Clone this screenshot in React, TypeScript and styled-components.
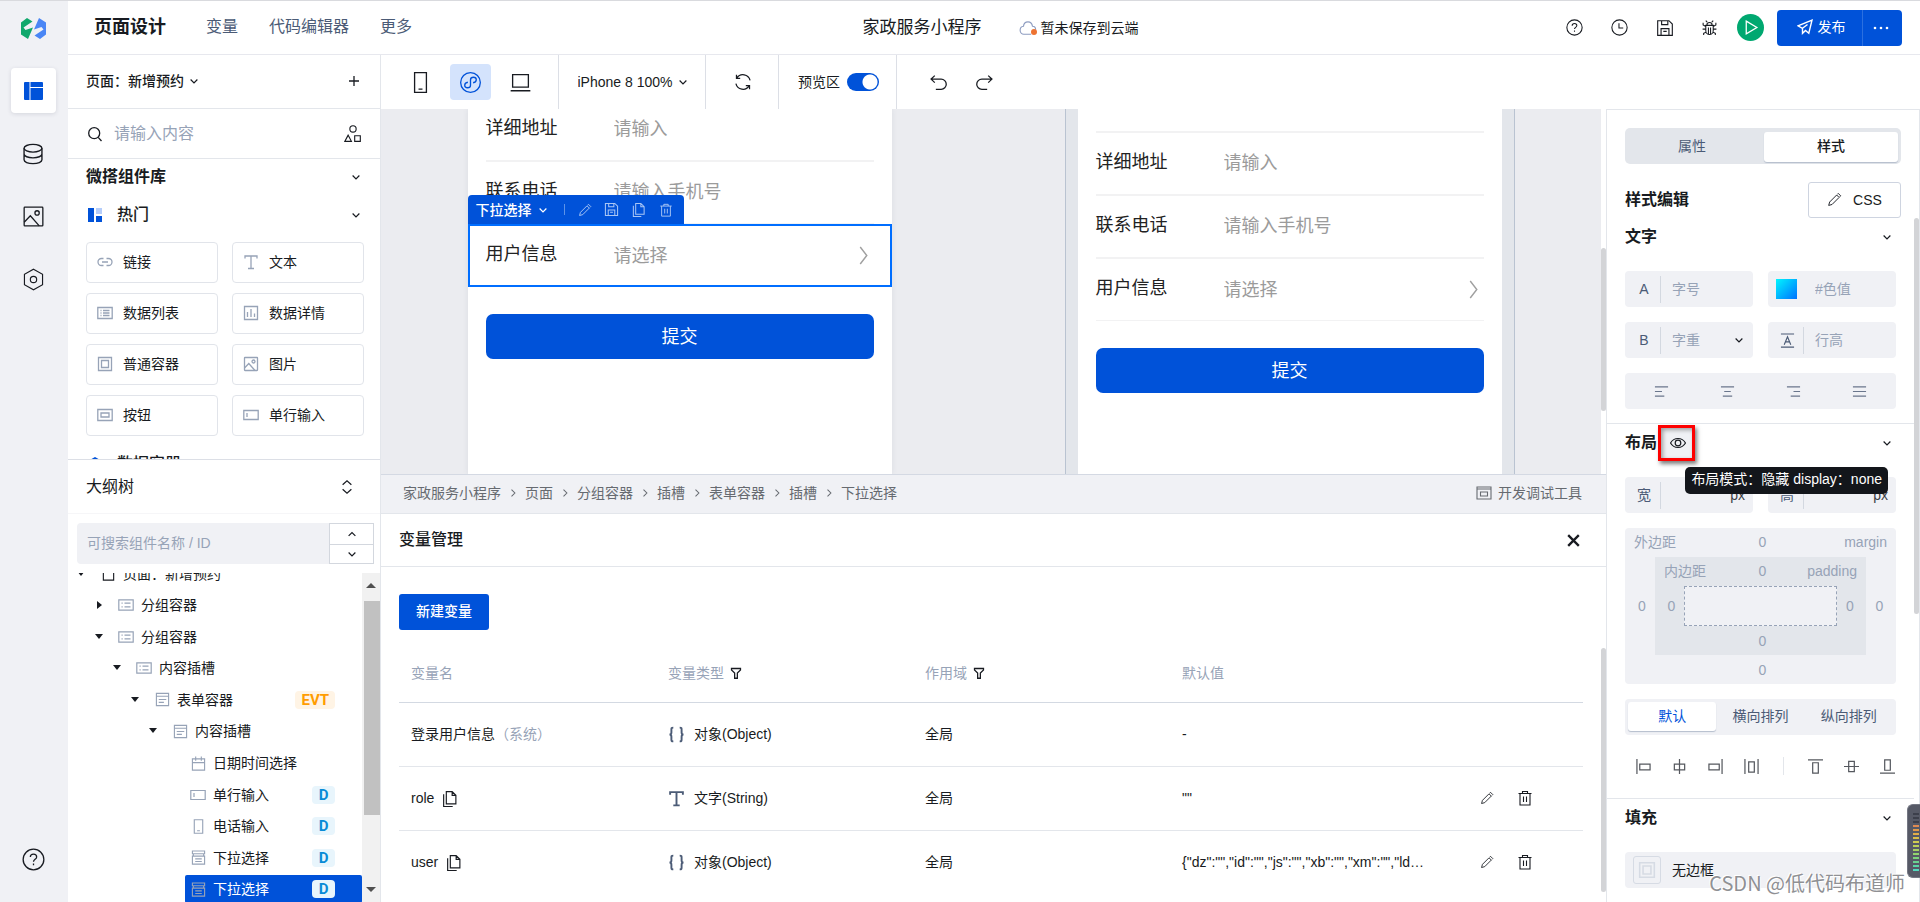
import React from "react";
import styled, { createGlobalStyle, css } from "styled-components";

const c = {
  blue: "#0052d9",
  line: "#e3e6eb",
  soft: "#f0f1f5",
  text: "#181b21",
  slate: "#4b5b76",
  mute: "#97a3b7",
};

const GlobalStyle = createGlobalStyle`
  *, *::before, *::after { box-sizing: border-box; }
  body {
    margin: 0;
    font-family: "Liberation Sans", "Noto Sans CJK SC", sans-serif;
    font-size: 14px;
    line-height: 20px;
    color: ${c.text};
    background: #fff;
  }
  button, input, select { font: inherit; color: inherit; margin: 0; padding: 0; border: 0; background: none; min-width: 0; }
  button { cursor: pointer; }
  select { appearance: none; cursor: pointer; }
  ul, ol { list-style: none; margin: 0; padding: 0; }
  h1, h2, h3 { margin: 0; font-size: 16px; line-height: 24px; font-weight: 500; }
  a { color: inherit; text-decoration: none; }
`;

/* ---------- icons, all drawn on a 16 unit grid ---------- */

const glyphs: Record<string, React.ReactNode> = {
  down: <path d="M3.5 6 8 10.5 12.5 6" />,
  up: <path d="M3.5 10.5 8 6l4.5 4.5" />,
  right: <path d="M6 3.5 10.500 8 6 12.500" />,
  bigRight: <path d="M5.500 1.500 10.500 8l-5 6.500" />,
  updown: <path d="M3 5.500 8 1l5 4.500M3 10.500 8 15l5-4.500" />,
  plus: <path d="M8 3v10M3 8h10" />,
  close: <path d="M3 3l10 10M13 3 3 13" />,
  search: <><circle cx="7.200" cy="7.200" r="5.500" /><path d="m11.200 11.400 3.300 3.600" /></>,
  shapes: <><circle cx="8" cy="3.500" r="2.800" /><path d="M3.700 9 .8 14.500h5.800zM9.500 9.500h5v5h-5z" /></>,
  database: <><ellipse cx="8" cy="3.800" rx="6.500" ry="2.800" /><path d="M1.500 3.800v8.400c0 1.600 2.900 2.800 6.500 2.800s6.500-1.200 6.500-2.800V3.800M1.500 8c0 1.600 2.900 2.800 6.500 2.800s6.500-1.200 6.500-2.800" /></>,
  image: <><rect x="1.500" y="1.500" width="13" height="13" rx=".5" /><circle cx="10.500" cy="5.500" r="1.500" /><path d="m1.500 12 4.300-4.500 6.200 7" /></>,
  hexagon: <><path d="M8 .8 14.300 4.400v7.200L8 15.200l-6.300-3.600V4.400z" /><circle cx="8" cy="8" r="2.200" /></>,
  help: <><circle cx="8" cy="8" r="7.200" /><path d="M5.800 6.300c0-1.300 1-2.100 2.200-2.100s2.200.8 2.200 2c0 1.600-2.200 1.700-2.200 3.300M8 10.800v1.200" /></>,
  clock: <><circle cx="8" cy="8" r="7.200" /><path d="M7.500 4v4.500h4" /></>,
  save: <path d="M1.500 1.500h10l3 3v10h-13zM5 1.500v3.500h5.500V1.500M4.500 14.500V8.500h7v6M6.500 11h3" />,
  bug: <path d="M4.500 6h7v5a3.500 3.500 0 0 1-7 0zM5.500 6c0-3.500 5-3.500 5 0M7 8v6M9 8v6M4.500 9.500h-3M11.500 9.500h3M4.500 7 2 5.500V3.500M11.500 7 14 5.500V3.500M4.700 12.500 2.500 13.500V15M11.300 12.500l2.200 1V15M5.800 3 4.500 1.500M10.200 3l1.300-1.500" />,
  play: <path d="M4 2l10 6-10 6z" />,
  send: <path d="M15 1.200 1 6.800l4.500 2.500v5l3-2.800 3.300 2.700zM5.500 9.300 10.500 5.500" />,
  mobile: <path d="M3.500.5h9v15h-9zM6.500 13h3" />,
  mini: <><ellipse cx="8" cy="8" rx="7.500" ry="7.500" /><path d="M10 8.200c1.600-.3 2.400-1.200 2.400-2.300C12.400 4.600 11.300 4 10.300 4 9 4 8 4.800 8 6v4c0 1.200-1 2-2.300 2-1 0-2.100-.7-2.100-1.900 0-1.100.8-2 2.400-2.300" /></>,
  laptop: <path d="M2 2h12v9.500H2zM.5 14.300h15" />,
  refresh: <path d="M14.300 6.500A6.500 6.500 0 0 0 2.500 4.500M1.700 9.500a6.500 6.500 0 0 0 11.800 2M2.200 1.500v3.300h3.300M13.800 14.500v-3.300h-3.300" />,
  undo: <path d="M4.500 1.500 1 4.800l3.500 3.300M1 4.800h9.500a4.800 4.800 0 0 1 0 9.600H5.500" />,
  redo: <path d="M11.500 1.500 15 4.800l-3.500 3.300M15 4.800H5.500a4.800 4.800 0 0 0 0 9.600h5" />,
  pencil: <path d="M10.300 3.200 2.800 10.700 1.800 14.300l3.600-1 7.500-7.500zM11 2.500l1-1 2.600 2.600-1 1" />,
  copy: <path d="M5 1.500h5.500l3.500 3.500v8H5zM10.500 1.500V5H14M2.500 4v11.500H11" />,
  trash: <path d="M1.500 3.500h13M5.500 3.500v-2h5v2M3 3.500V15h10V3.500M6.500 6.500V12M9.500 6.500V12" />,
  filter: <path d="M2 2h12v2L9.800 8v7H6.200V8L2 4z" />,
  panel: <path d="M1 2h14v12H1zM1 4h14M4.500 7h7v4h-7z" />,
  link: <path d="M6.500 4.500h-2a3.500 3.500 0 0 0 0 7h2M9.500 4.500h2a3.500 3.500 0 0 1 0 7h-2M5 8h6" />,
  type: <path d="M2 4.500V2h12v2.500M8 2v12.500M5 14.500h6" />,
  list: <path d="M.8 2.500h14.400v11H.8zM3.500 5.500h1M6 5.500h6.500M3.500 8h1M6 8h6.500M3.500 10.500h1M6 10.500h6.500" />,
  group: <path d="M.8 2.800h14.400v10.400H.8zM3.500 6.200h1.200M6.500 6.200h6M3.500 9.800h1.200M6.500 9.800h6" />,
  chart: <path d="M1.500 1.500h13v13h-13zM4.500 7v5M8 4v8M11.500 8.500V12" />,
  box: <path d="M1.500 1.500h13v13h-13zM4.500 4.500h7v7h-7z" />,
  button: <path d="M.8 2.500h14.400v11H.8zM4 6h8v4H4z" />,
  field: <path d="M.8 3.500h14.400v9H.8zM4 6v4" />,
  form: <path d="M1.500 1.500h13v13h-13zM1.500 4.500h13M4 8h8M4 11h5.500" />,
  calendar: <path d="M1.500 3h13v12h-13zM1.500 7h13M5 .5V5M11 .5V5" />,
  phone: <path d="M3.500.8h9v14.400h-9zM6.500 12.500h3" />,
  dropdown: <path d="M1.500 1h13v3h-13zM1.500 6.500h13V15h-13zM2.500 4v2.500M13.500 4v2.500M4.500 9.500h7M4.500 12.200h7" />,
  page: <path d="M2.500 1h11v14h-11z" />,
  eye: <><path d="M.5 8C4 2 12 2 15.500 8 12 14 4 14 .5 8z" /><circle cx="8" cy="8" r="2.800" /></>,
  textLeft: <path d="M1 3h14M1 8h7.500M1 13h10" />,
  textCenter: <path d="M1 3h14M4.500 8h7M3 13h10" />,
  textRight: <path d="M1 3h14M8 8h7M5 13h10" />,
  textJustify: <path d="M1 3h14M1 8h14M1 13h14" />,
  lineHeight: <path d="M1 1h14M1 15h14M4.500 12.500 8 4l3.500 8.500M5.800 9.500h4.400" />,
  alignL: <path d="M1 0v16M4 5.500h11v6H4z" />,
  alignC: <path d="M8 0v16M2.500 5.500h11v6h-11z" />,
  alignR: <path d="M15 0v16M1 5.500h11v6H1z" />,
  spread: <path d="M1 0v16M15 0v16M5 3h6v11H5z" />,
  alignT: <path d="M0 1h16M5 4h6v11H5z" />,
  alignM: <path d="M0 8h16M5 2.500h6v11H5z" />,
  alignB: <path d="M0 15h16M5 1h6v11H5z" />,
  cloud: <path d="M4.300 13.500h6.500M14.800 9.500c0-1.700-1.200-2.900-2.800-3C11.600 4 10 2.600 8 2.600 5.800 2.600 4.200 4.200 4 6.500 2.200 6.700 1 8.200 1 10c0 2 1.500 3.500 3.300 3.500" />,
  braces: <path d="M5 1.500C3 1.500 3.200 2.300 3.200 4v2c0 1-.5 2-1.800 2C2.700 8 3.200 9 3.200 10v2c0 1.700-.2 2.500 1.800 2.500M11 1.500c2 0 1.800.8 1.800 2.500v2c0 1 .5 2 1.800 2-1.300 0-1.800 1-1.800 2v2c0 1.700.2 2.500-1.800 2.500" />,
};

const Svg = styled.svg`
  display: block;
  flex: none;
  fill: none;
  stroke: currentColor;
`;

function Icon({ name, size = 16, w = 1.1, color }: { name: string; size?: number; w?: number; color?: string }) {
  return (
    <Svg width={size} height={size} viewBox="0 0 16 16" strokeWidth={w} color={color} aria-hidden="true">
      {glyphs[name]}
    </Svg>
  );
}

/* ---------- shell ---------- */

const Shell = styled.div`
  display: flex;
  height: 100vh;
  border-top: 1px solid #d9dade;
  overflow: hidden;
  position: relative;
`;
const Main = styled.div`
  flex: 1;
  min-width: 0;
  display: flex;
  flex-direction: column;
`;
const Body = styled.div`
  flex: 1;
  min-height: 0;
  display: flex;
`;
const Work = styled.div`
  flex: 1;
  min-width: 0;
  display: flex;
  flex-direction: column;
`;
const Center = styled.div`
  flex: 1;
  min-width: 0;
  display: flex;
  flex-direction: column;
`;

/* ---------- rail ---------- */

const Rail = styled.nav`
  width: 68px;
  flex: none;
  background: ${c.soft};
  display: flex;
  flex-direction: column;
  align-items: center;
  gap: 18px;
  padding: 16px 2px 20px 0;
`;
const Logo = styled.a`
  display: block;
  padding: 1px;
  margin-bottom: 5px;
`;
const RailButton = styled.button<{ $on?: boolean; $last?: boolean }>`
  width: 45px;
  height: 45px;
  display: grid;
  place-items: center;
  border-radius: 4px;
  ${(p) => p.$on && css`background: #fff; box-shadow: 0 1px 4px rgba(40, 50, 80, 0.14);`}
  ${(p) => p.$last && css`margin-top: auto;`}
`;

/* ---------- header ---------- */

const Header = styled.header`
  flex: none;
  height: 54px;
  display: grid;
  grid-template-columns: 1fr auto 1fr;
  align-items: center;
  padding: 0 18px 0 26px;
  border-bottom: 1px solid #e7e8ee;
`;
const Nav = styled.div`
  display: flex;
  align-items: center;
  gap: 31px;
  padding-bottom: 1px;
  font-size: 16px;
  color: ${c.slate};
`;
const Brand = styled.h1`
  font-size: 18px;
  font-weight: 700;
  color: ${c.text};
  margin-right: 9px;
`;
const Project = styled.div`
  display: flex;
  align-items: center;
  gap: 37px;
  padding-left: 5px;
  font-size: 17px;
`;
const Status = styled.span`
  display: flex;
  align-items: center;
  gap: 4px;
  font-size: 14px;
  position: relative;
`;
const Dot = styled.i`
  position: absolute;
  left: 12px;
  top: 11px;
  width: 6px;
  height: 6px;
  border-radius: 50%;
  background: #ed7332;
`;
const Actions = styled.div`
  display: flex;
  align-items: center;
  justify-content: flex-end;
`;
const HeadButton = styled.button`
  width: 45px;
  height: 36px;
  display: grid;
  place-items: center;
`;
const Play = styled.button`
  width: 27px;
  height: 27px;
  border-radius: 50%;
  background: #00a870;
  color: #fff;
  display: grid;
  place-items: center;
  margin: 0 13px 0 5px;
`;
const Publish = styled.button`
  height: 36px;
  width: 85px;
  display: flex;
  align-items: center;
  justify-content: center;
  gap: 5px;
  padding: 0 0 2px 3px;
  background: ${c.blue};
  color: #fff;
  border-radius: 4px 0 0 4px;
`;
const More = styled.button`
  height: 36px;
  width: 40px;
  display: grid;
  place-items: center;
  padding-right: 4px;
  background: ${c.blue};
  color: #fff;
  border-left: 1px solid #2b70e0;
  border-radius: 0 4px 4px 0;
`;

/* ---------- left panel ---------- */

const Left = styled.aside`
  width: 313px;
  flex: none;
  border-right: 1px solid ${c.line};
  display: flex;
  flex-direction: column;
`;
const PageRow = styled.div`
  flex: none;
  height: 54px;
  display: flex;
  align-items: center;
  justify-content: space-between;
  padding: 0 18px 2px;
  border-bottom: 1px solid ${c.line};
  select { font-weight: 500; }
`;
const SelectBox = styled.label`
  display: flex;
  align-items: center;
  gap: 4px;
`;
const SearchRow = styled.label`
  flex: none;
  height: 50px;
  display: flex;
  align-items: center;
  gap: 11px;
  padding: 0 18px 0 19px;
  border-bottom: 1px solid ${c.line};
  font-size: 16px;
  input { flex: 1; outline: 0; }
  input::placeholder { color: ${c.mute}; }
`;
const Library = styled.section`
  flex: 1;
  min-height: 0;
  overflow: hidden;
`;
const LibTitle = styled.div`
  height: 36px;
  display: flex;
  align-items: center;
  justify-content: space-between;
  padding: 0 18px;
  h2 { font-weight: 600; }
`;
const LibGroup = styled.div`
  height: 39px;
  display: flex;
  align-items: center;
  padding: 0 18px 0 20px;
  gap: 15px;
  h3 { flex: 1; }
`;
const Cards = styled.ul`
  display: grid;
  grid-template-columns: 1fr 1fr;
  gap: 10px 14px;
  padding: 8px 16px 8px 18px;
`;
const Card = styled.button`
  width: 100%;
  height: 41px;
  display: flex;
  align-items: center;
  gap: 10px;
  padding: 0 10px 2px;
  border: 1px solid #e1e4ea;
  border-radius: 4px;
  svg { color: ${c.mute}; }
`;

const Outline = styled.section`
  flex: none;
  height: 443px;
  border-top: 1px solid #dcdfe6;
  display: flex;
  flex-direction: column;
`;
const OutlineTitle = styled.div`
  height: 54px;
  flex: none;
  display: flex;
  align-items: center;
  justify-content: space-between;
  padding: 0 26px 0 18px;
  border-bottom: 1px solid #f6f6f8;
  h2 { font-weight: 400; }
`;
const OutlineSearch = styled.div`
  flex: none;
  display: flex;
  padding: 9px 6px 9px 9px;
  input {
    flex: 1;
    height: 41px;
    background: ${c.soft};
    border-radius: 4px 0 0 4px;
    padding: 0 10px 2px;
    outline: 0;
  }
  input::placeholder { color: ${c.mute}; }
`;
const Stepper = styled.div`
  width: 45px;
  display: grid;
  grid-template-rows: 1fr 1fr;
  border: 1px solid #d3d7de;
  button { display: grid; place-items: center; }
  button + button { border-top: 1px solid #d3d7de; }
`;
const TreeArea = styled.div`
  flex: 1;
  min-height: 0;
  display: flex;
  overflow: hidden;
`;
const Tree = styled.ul`
  flex: 1;
  height: 347px;
  margin-top: -15px;
  display: grid;
  grid-auto-rows: 1fr;
`;
const TreeItem = styled.li<{ $level: number }>`
  display: flex;
  align-items: center;
  padding-left: ${(p) => 7 + p.$level * 18}px;
`;
const Caret = styled.span`
  width: 12px;
  margin-right: 8px;
  display: grid;
  place-items: center;
  svg { fill: ${c.text}; stroke: none; }
`;
const Node = styled.button<{ $on?: boolean }>`
  flex: 1;
  height: 28px;
  display: flex;
  align-items: center;
  gap: 6px;
  padding: 0 27px 0 4px;
  border-radius: 2px;
  white-space: nowrap;
  text-align: left;
  color: ${(p) => (p.$on ? "#fff" : c.text)};
  background: ${(p) => (p.$on ? c.blue : "none")};
`;
const NodeIcon = styled.span<{ $dark?: boolean }>`
  width: 18px;
  display: grid;
  place-items: center;
  color: ${(p) => (p.$dark ? c.text : c.mute)};
`;
const Badge = styled.span<{ $evt?: boolean }>`
  margin-left: auto;
  height: 18px;
  line-height: 18px;
  padding: 0 6px;
  border-radius: 4px;
  font-family: Roboto, sans-serif;
  font-size: 15px;
  font-weight: 700;
  color: ${(p) => (p.$evt ? "#ff9d00" : "#0a8bd6")};
  background: ${(p) => (p.$evt ? "#fff4e5" : "#e8f5fc")};
  min-width: 23px;
  text-align: center;
`;
const Bar = styled.div`
  width: 18px;
  flex: none;
  background: #f1f1f1;
  display: flex;
  flex-direction: column;
  align-items: center;
  padding: 8px 0;
  svg { fill: #505050; stroke: none; }
`;
const BarThumb = styled.div`
  width: 16px;
  height: 214px;
  margin: 12px 0 auto 2px;
  background: #c1c1c1;
`;

/* ---------- toolbar ---------- */

const Toolbar = styled.div`
  flex: none;
  height: 54px;
  display: flex;
`;
const ToolGroup = styled.div<{ $w?: number; $gap?: number; $open?: boolean }>`
  display: flex;
  align-items: center;
  justify-content: center;
  gap: ${(p) => p.$gap ?? 0}px;
  width: ${(p) => (p.$w ? `${p.$w}px` : "auto")};
  ${(p) => (p.$open ? css`padding-left: 32px;` : css`border-right: 1px solid #dcdfe6; padding-left: 2px;`)}
`;
const ToolButton = styled.button<{ $on?: boolean; $narrow?: boolean }>`
  width: ${(p) => (p.$narrow ? 18 : 41)}px;
  height: 36px;
  border-radius: 4px;
  display: grid;
  place-items: center;
  color: ${(p) => (p.$on ? c.blue : c.text)};
  background: ${(p) => (p.$on ? "#d4e3fc" : "none")};
`;
const Toggle = styled.input`
  appearance: none;
  width: 32px;
  height: 18px;
  border-radius: 9px;
  background: radial-gradient(circle at 23px 9px, #fff 7px, transparent 8px), ${c.blue};
`;

/* ---------- canvas ---------- */

const Stage = styled.div`
  flex: 1;
  min-height: 0;
  display: flex;
  overflow: hidden;
`;
const Panes = styled.div`
  flex: 1;
  display: grid;
  grid-template-columns: 1fr 1fr;
  background: #ebecf0;
`;
const Pane = styled.div`
  display: flex;
  justify-content: center;
  padding-right: 13px;
`;
const Track = styled.div<{ $top: number; $len: number }>`
  width: 5px;
  flex: none;
  padding-top: ${(p) => p.$top}px;
  &::before {
    content: "";
    display: block;
    height: ${(p) => p.$len}px;
    border-radius: 3px;
    background: #d3d4d7;
  }
`;
const Bezel = styled.div`
  display: flex;
  padding: 0 12px;
  background: #e3e6eb;
  border: solid #b9c3d1;
  border-width: 0 1px;
`;
const Screen = styled.div<{ $shadow?: boolean }>`
  width: 424px;
  background: #fff;
  font-size: 18px;
  ${(p) => p.$shadow && css`box-shadow: 0 0 6px rgba(40, 50, 80, 0.08);`}
`;
const FormList = styled.div<{ $pull?: number }>`
  margin-top: ${(p) => -(p.$pull ?? 0)}px;
`;
const FieldRow = styled.label<{ $thin?: boolean; $selected?: boolean; $cut?: boolean }>`
  display: flex;
  align-items: center;
  height: ${(p) => (p.$cut ? 24 : p.$thin && !p.$selected ? 62 : 63)}px;
  margin: ${(p) => (p.$selected ? "-1px 0 0" : "0 18px")};
  padding: ${(p) => (p.$selected ? "0 16px" : "0")};
  color: #222;
  ${(p) =>
    p.$selected
      ? css`border: 2px solid #006eff; background: #fff;`
      : css`border-bottom: ${p.$thin ? 1 : 2}px solid #f2f2f3;`}
  span { width: 128px; padding-bottom: 3px; }
  input, select { flex: 1; height: 27px; outline: 0; color: #9b9b9b; }
  input::placeholder { color: #9b9b9b; }
`;
const Submit = styled.button`
  display: block;
  width: calc(100% - 36px);
  height: 45px;
  margin: 27px 18px 0;
  border-radius: 7px;
  background: ${c.blue};
  color: #fff;
  font-size: 18px;
`;
const SelectedWrap = styled.div`
  position: relative;
`;
const QuickBar = styled.div`
  position: absolute;
  z-index: 1;
  left: 0;
  bottom: 100%;
  height: 29px;
  display: flex;
  align-items: center;
  padding: 0 9px 0 8px;
  gap: 9px;
  background: ${c.blue};
  border-radius: 4px 4px 0 0;
  color: #a9c6f5;
  font-size: 14px;
  button { width: 18px; height: 24px; display: grid; place-items: center; }
  button:first-child { width: auto; display: flex; align-items: center; gap: 5px; color: #fff; margin-right: 6px; font-weight: 500; }
  hr { width: 1px; height: 11px; border: 0; margin: 0 2px 0 0; background: #5d93e8; }
`;

/* ---------- bottom panel ---------- */

const Crumbs = styled.div`
  flex: none;
  height: 40px;
  display: flex;
  align-items: center;
  justify-content: space-between;
  padding: 0 24px 2px 22px;
  background: ${c.soft};
  border-top: 1px solid #d4d9e3;
  border-bottom: 1px solid ${c.line};
  color: #666a70;
  ol { display: flex; }
  li { display: flex; align-items: center; }
  li:not(:last-child) svg { margin: 0 6px; }
  button { display: flex; align-items: center; gap: 6px; }
`;
const Vars = styled.section`
  flex: none;
  height: 388px;
  overflow: hidden;
  display: flex;
  flex-direction: column;
`;
const VarsHead = styled.div`
  flex: none;
  height: 53px;
  display: flex;
  align-items: center;
  justify-content: space-between;
  padding: 0 24px 0 18px;
  border-bottom: 1px solid ${c.line};
`;
const VarsBody = styled.div`
  flex: 1;
  min-height: 0;
  display: flex;
`;
const VarsMain = styled.div`
  flex: 1;
  min-width: 0;
  padding: 27px 18px 0;
`;
const NewVar = styled.button`
  height: 36px;
  width: 90px;
  padding-bottom: 3px;
  border-radius: 3px;
  background: ${c.blue};
  color: #fff;
  font-weight: 500;
`;
const Table = styled.table`
  width: 100%;
  margin-top: 15px;
  border-collapse: collapse;
  table-layout: fixed;
  th, td { padding: 0 0 0 12px; text-align: left; font-weight: 400; white-space: nowrap; }
  th { height: 57px; color: ${c.mute}; border-bottom: 1px solid #d3d9e2; }
  td { height: 64px; }
  tbody tr + tr td { border-top: 1px solid ${c.line}; }
`;
const Col = styled.col<{ $w?: number }>`
  width: ${(p) => (p.$w ? `${p.$w}px` : "auto")};
`;
const Cell = styled.div<{ $gap?: number }>`
  display: flex;
  align-items: center;
  gap: ${(p) => p.$gap ?? 9}px;
`;
const Muted = styled.span`
  color: ${c.mute};
`;
const IconButton = styled.button`
  display: grid;
  place-items: center;
  color: inherit;
`;

/* ---------- right panel ---------- */

const Right = styled.aside`
  width: 314px;
  flex: none;
  display: flex;
  border: 1px solid ${c.line};
  border-bottom: 0;
`;
const Props = styled.div`
  flex: 1;
  min-width: 0;
`;
const TabBar = styled.div`
  margin: 18px 13px 0 18px;
  height: 36px;
  padding: 4px 3px 2px 0;
  border-radius: 5px;
  background: ${c.line};
  display: grid;
  grid-template-columns: 1fr 1fr;
  gap: 5px;
`;
const Tab = styled.button<{ $on?: boolean; $blue?: boolean }>`
  border-radius: 3px;
  padding-bottom: 2px;
  color: ${(p) => (p.$on ? (p.$blue ? c.blue : c.text) : c.slate)};
  font-weight: ${(p) => (p.$on && !p.$blue ? 500 : 400)};
  ${(p) => p.$on && css`background: #fff; box-shadow: 0 1px 1px #b4bdcc;`}
`;
const StyleHead = styled.div`
  display: flex;
  align-items: center;
  justify-content: space-between;
  margin: 18px 13px 0 18px;
  h2 { font-weight: 600; }
`;
const CssButton = styled.button`
  width: 93px;
  height: 36px;
  display: flex;
  align-items: center;
  justify-content: center;
  gap: 11px;
  padding-bottom: 1px;
  border: 1px solid #ced4e0;
  border-radius: 3px;
`;
const Section = styled.section`
  padding: 0 18px 14px;
  & + & { border-top: 1px solid ${c.line}; }
`;
const SectionHead = styled.div`
  height: 38px;
  display: flex;
  align-items: center;
  position: relative;
  h3 { font-weight: 600; }
  > button:last-child { margin-left: auto; margin-right: 3px; }
`;
const Stack = styled.div`
  display: grid;
  gap: 15px;
  padding-top: 15px;
`;
const Pair = styled.div`
  display: grid;
  grid-template-columns: 1fr 1fr;
  gap: 15px;
`;
const Field = styled.label`
  height: 36px;
  display: flex;
  align-items: center;
  background: ${c.soft};
  border-radius: 4px;
  padding-right: 8px;
  color: ${c.slate};
  input, select { flex: 1; width: 0; padding-left: 11px; outline: 0; color: ${c.mute}; align-self: stretch; }
  input::placeholder { color: ${c.mute}; }
  > svg:last-child { color: ${c.text}; }
  em { font-style: normal; color: #3c3f45; }
`;
const Prefix = styled.span<{ $bare?: boolean }>`
  width: 36px;
  height: 27px;
  padding-left: ${(p) => (p.$bare ? 0 : 3)}px;
  display: grid;
  place-items: center;
  ${(p) => !p.$bare && css`border-right: 1px solid #d3d8e0;`}
`;
const Swatch = styled.i`
  width: 21px;
  height: 20px;
  background: linear-gradient(135deg, #00f6ff, #0072ff);
`;
const AlignBar = styled.div`
  height: 36px;
  display: grid;
  grid-template-columns: repeat(4, 1fr);
  padding: 0 3px;
  background: ${c.soft};
  border-radius: 4px;
  color: #6a768c;
  button { display: grid; place-items: center; }
`;
const Marked = styled.button`
  width: 37px;
  height: 36px;
  margin-left: 1px;
  padding-left: 3px;
  border: 3px solid #fe0000;
  background: ${c.soft};
  box-shadow: 2px 3px 4px rgba(0, 0, 0, 0.5), inset 2px 2px 4px rgba(0, 0, 0, 0.35);
  display: grid;
  place-items: center;
`;
const Tip = styled.div`
  position: absolute;
  z-index: 1;
  right: 8px;
  top: 43px;
  height: 27px;
  line-height: 25px;
  padding: 0 6px;
  border-radius: 5px;
  background: #13161b;
  color: #fff;
  white-space: nowrap;
`;
const Spacing = styled.div<{ $inner?: boolean }>`
  display: grid;
  grid-template-columns: ${(p) => (p.$inner ? "29px 1fr 29px" : "30px 1fr 30px")};
  grid-template-rows: 29px 1fr 29px;
  background: ${(p) => (p.$inner ? c.line : c.soft)};
  border-radius: ${(p) => (p.$inner ? 0 : 4)}px;
  height: ${(p) => (p.$inner ? 98 : 156)}px;
  color: ${c.mute};
`;
const SpacingTop = styled.div`
  grid-column: 1 / -1;
  display: grid;
  grid-template-columns: 1fr 20px 1fr;
  align-items: center;
  padding: 0 9px 2px;
  span:last-child { text-align: right; }
`;
const Zero = styled.input<{ $wide?: boolean; $end?: boolean }>`
  text-align: center;
  outline: 0;
  width: 100%;
  padding: ${(p) => (p.$end ? "0 3px 0 0" : "0 0 0 4px")};
  color: ${c.mute};
  ${(p) => p.$wide && css`grid-column: 1 / -1;`}
`;
const Core = styled.div`
  border: 1px dashed ${c.mute};
  background: ${c.soft};
`;
const Segments = styled.div`
  height: 36px;
  padding: 3px 3px 4px;
  background: ${c.soft};
  border-radius: 4px;
  display: grid;
  grid-template-columns: repeat(3, 1fr);
`;
const FlexBar = styled.div`
  height: 34px;
  display: grid;
  grid-template-columns: repeat(4, 36px) 1fr repeat(3, 36px);
  align-items: center;
  margin-right: -9px;
  padding-bottom: 2px;
  color: #55585e;
  button { display: grid; place-items: center; }
  i { justify-self: center; width: 1px; height: 18px; background: ${c.line}; }
`;
const BorderBox = styled.span`
  width: 28px;
  height: 28px;
  margin: 0 11px 0 8px;
  display: grid;
  place-items: center;
  border: 1px solid #d6dbe4;
  border-radius: 3px;
  color: #d6dbe4;
`;
const BorderField = styled.button`
  height: 36px;
  display: flex;
  align-items: center;
  background: ${c.soft};
  border-radius: 4px;
`;

/* ---------- floating pieces ---------- */

const Watermark = styled.div`
  position: absolute;
  right: 15px;
  bottom: 4px;
  font-family: "Noto Sans CJK SC", sans-serif;
  font-size: 20px;
  line-height: 30px;
  color: #8f9094;
  text-shadow: 1px 1px 0 #fff, -1px -1px 0 #fff;
`;
const Meter = styled.div`
  position: absolute;
  right: 0;
  bottom: 24px;
  width: 13px;
  height: 74px;
  padding: 8px 2px 0 5px;
  background: #565966;
  border: 1px solid #747783;
  border-right: 0;
  border-radius: 6px 0 0 6px;
`;

/* ---------- data ---------- */

const cards = [
  ["link", "链接"], ["type", "文本"], ["list", "数据列表"], ["chart", "数据详情"],
  ["box", "普通容器"], ["image", "图片"], ["button", "按钮"], ["field", "单行输入"],
];

type TreeNode = { level: number; icon: string; label: string; caret?: "open" | "closed"; badge?: string; on?: boolean };
const tree: TreeNode[] = [
  { level: 0, icon: "page", label: "页面：新增预约", caret: "open" },
  { level: 1, icon: "group", label: "分组容器", caret: "closed" },
  { level: 1, icon: "group", label: "分组容器", caret: "open" },
  { level: 2, icon: "group", label: "内容插槽", caret: "open" },
  { level: 3, icon: "form", label: "表单容器", caret: "open", badge: "EVT" },
  { level: 4, icon: "form", label: "内容插槽", caret: "open" },
  { level: 5, icon: "calendar", label: "日期时间选择" },
  { level: 5, icon: "field", label: "单行输入", badge: "D" },
  { level: 5, icon: "phone", label: "电话输入", badge: "D" },
  { level: 5, icon: "dropdown", label: "下拉选择", badge: "D" },
  { level: 5, icon: "dropdown", label: "下拉选择", badge: "D", on: true },
];

const wideIcons = ["group", "field", "list", "button"];
const crumbs = ["家政服务小程序", "页面", "分组容器", "插槽", "表单容器", "插槽", "下拉选择"];

const rows = [
  { name: "登录用户信息", system: true, icon: "braces", type: "对象(Object)", value: "-" },
  { name: "role", icon: "type", type: "文字(String)", value: '""' },
  { name: "user", icon: "braces", type: "对象(Object)", value: '{"dz":"","id":"","js":"","xb":"","xm":"","ld…' },
];

const meterColors = ["#3c3f4b", "#3c3f4b", "#3c3f4b", "#e08a52", "#e29a4a", "#e2ad48", "#dcc04a", "#cfcc50", "#bccf58", "#a8d062", "#92d26e", "#7cd37c", "#6ad38e", "#5bd5a4", "#52d8bc"];

/* ---------- parts ---------- */

function Chevron({ size = 12 }: { size?: number }) {
  return <Icon name="down" size={size} w={1.6} />;
}

function Phone({ editing }: { editing?: boolean }) {
  return (
    <Screen $shadow={editing}>
      <FormList $pull={editing ? 10 : 0}>
        {!editing && <FieldRow as="div" $cut />}
        <FieldRow><span>详细地址</span><input placeholder="请输入" /></FieldRow>
        <FieldRow><span>联系电话</span><input placeholder="请输入手机号" /></FieldRow>
        <SelectedWrap>
          {editing && (
            <QuickBar>
              <button>下拉选择<Chevron size={12} /></button>
              <hr />
              <button aria-label="编辑"><Icon name="pencil" size={14} /></button>
              <button aria-label="保存"><Icon name="save" size={15} /></button>
              <button aria-label="复制"><Icon name="copy" size={15} /></button>
              <button aria-label="删除"><Icon name="trash" size={14} /></button>
            </QuickBar>
          )}
          <FieldRow $thin $selected={editing}>
            <span>用户信息</span>
            <select defaultValue="请选择"><option>请选择</option></select>
            <Icon name="bigRight" size={21} w={1.1} color="#a0a0a0" />
          </FieldRow>
        </SelectedWrap>
      </FormList>
      <Submit>提交</Submit>
    </Screen>
  );
}

function LeftPanel() {
  return (
    <Left>
      <PageRow>
        <SelectBox>
          <select aria-label="页面" defaultValue="页面：新增预约"><option>页面：新增预约</option></select>
          <Chevron />
        </SelectBox>
        <IconButton aria-label="新增页面"><Icon name="plus" size={16} w={1.3} /></IconButton>
      </PageRow>
      <SearchRow>
        <Icon name="search" size={16} w={1.3} />
        <input aria-label="搜索组件" placeholder="请输入内容" />
        <Icon name="shapes" size={18} w={1} />
      </SearchRow>
      <Library>
        <LibTitle><h2>微搭组件库</h2><Chevron /></LibTitle>
        <LibGroup>
          <svg width="14" height="14" viewBox="0 0 14 14" aria-hidden="true">
            <path fill="#0052d9" d="M0 0h6v14H0zM8 8h6v6H8z" /><path fill="#b5cdfa" d="M8 0h6v6H8z" />
          </svg>
          <h3>热门</h3><Chevron />
        </LibGroup>
        <Cards>
          {cards.map(([icon, label]) => (
            <li key={label}>
              <Card><Icon name={icon} size={16} w={1.3} />{label}</Card>
            </li>
          ))}
        </Cards>
        <LibGroup>
          <svg width="14" height="14" viewBox="0 0 14 14" aria-hidden="true">
            <path fill="#0052d9" d="M7 0l7 4-7 4-7-4z" /><path fill="#b5cdfa" d="M0 7l7 4 7-4v3l-7 4-7-4z" />
          </svg>
          <h3>数据容器</h3><Chevron />
        </LibGroup>
      </Library>
      <Outline>
        <OutlineTitle><h2>大纲树</h2><IconButton aria-label="折叠"><Icon name="updown" size={14} w={1.4} /></IconButton></OutlineTitle>
        <OutlineSearch>
          <input aria-label="搜索大纲" placeholder="可搜索组件名称 / ID" />
          <Stepper>
            <button aria-label="上一个"><Icon name="up" size={12} w={1.6} /></button>
            <button aria-label="下一个"><Icon name="down" size={12} w={1.6} /></button>
          </Stepper>
        </OutlineSearch>
        <TreeArea>
          <Tree role="tree">
            {tree.map((n, i) => (
              <TreeItem key={i} $level={n.level} role="treeitem" aria-selected={!!n.on}>
                <Caret>
                  {n.caret && (
                    <svg width="8" height="8" viewBox="0 0 8 8" aria-hidden="true">
                      <path d={n.caret === "open" ? "M0 1h8L4 6z" : "M2 0v8l5-4z"} />
                    </svg>
                  )}
                </Caret>
                <Node $on={n.on}>
                  <NodeIcon $dark={n.icon === "page"}><Icon name={n.icon} size={wideIcons.includes(n.icon) ? 16 : 15} w={1.2} /></NodeIcon>
                  {n.label}
                  {n.badge && <Badge $evt={n.badge === "EVT"}>{n.badge}</Badge>}
                </Node>
              </TreeItem>
            ))}
          </Tree>
          <Bar>
            <svg width="10" height="8" viewBox="0 0 10 8" aria-hidden="true"><path d="M5 2l5 5H0z" /></svg>
            <BarThumb />
            <svg width="10" height="8" viewBox="0 0 10 8" aria-hidden="true"><path d="M5 6l5-5H0z" /></svg>
          </Bar>
        </TreeArea>
      </Outline>
    </Left>
  );
}

function VariablePanel() {
  return (
    <Vars>
      <VarsHead>
        <h2>变量管理</h2>
        <IconButton aria-label="关闭"><Icon name="close" size={17} w={2.2} /></IconButton>
      </VarsHead>
      <VarsBody>
        <VarsMain>
          <NewVar>新建变量</NewVar>
          <Table>
            <colgroup><Col $w={257} /><Col $w={257} /><Col $w={257} /><Col /><Col $w={115} /></colgroup>
            <thead>
              <tr>
                <th>变量名</th>
                <th><Cell $gap={6}>变量类型<Icon name="filter" size={12} w={1.7} color="#181b21" /></Cell></th>
                <th><Cell $gap={6}>作用域<Icon name="filter" size={12} w={1.7} color="#181b21" /></Cell></th>
                <th>默认值</th>
                <th aria-label="操作" />
              </tr>
            </thead>
            <tbody>
              {rows.map((r) => (
                <tr key={r.name}>
                  <td>
                    {r.system
                      ? <>{r.name}<Muted>（系统）</Muted></>
                      : <Cell $gap={7}>{r.name}<IconButton aria-label="复制"><Icon name="copy" size={17} w={1.1} /></IconButton></Cell>}
                  </td>
                  <td><Cell><Icon name={r.icon} size={17} w={1.8} color={c.slate} /><span>{r.type}</span></Cell></td>
                  <td>全局</td>
                  <td>{r.value}</td>
                  <td>
                    {!r.system && (
                      <Cell $gap={23}>
                        <IconButton aria-label="编辑"><Icon name="pencil" size={14} w={1} /></IconButton>
                        <IconButton aria-label="删除"><Icon name="trash" size={16} /></IconButton>
                      </Cell>
                    )}
                  </td>
                </tr>
              ))}
            </tbody>
          </Table>
        </VarsMain>
        <Track $top={81} $len={244} />
      </VarsBody>
    </Vars>
  );
}

function StylePanel() {
  return (
    <Right>
      <Props>
        <TabBar role="tablist">
          <Tab role="tab">属性</Tab>
          <Tab role="tab" aria-selected $on>样式</Tab>
        </TabBar>
        <StyleHead>
          <h2>样式编辑</h2>
          <CssButton><Icon name="pencil" size={15} w={1} />CSS</CssButton>
        </StyleHead>
        <Section>
          <SectionHead><h3>文字</h3><IconButton aria-label="收起文字"><Chevron /></IconButton></SectionHead>
          <Stack>
            <Pair>
              <Field><Prefix>A</Prefix><input aria-label="字号" placeholder="字号" /></Field>
              <Field><Prefix $bare><Swatch /></Prefix><input aria-label="色值" placeholder="#色值" /></Field>
            </Pair>
            <Pair>
              <Field>
                <Prefix>B</Prefix>
                <select aria-label="字重" defaultValue="字重"><option>字重</option></select>
                <Chevron />
              </Field>
              <Field><Prefix><Icon name="lineHeight" size={15} w={1.2} /></Prefix><input aria-label="行高" placeholder="行高" /></Field>
            </Pair>
            <AlignBar>
              {["textLeft", "textCenter", "textRight", "textJustify"].map((n) => (
                <button key={n} aria-label={n}><Icon name={n} size={15} w={1.3} /></button>
              ))}
            </AlignBar>
          </Stack>
        </Section>
        <Section>
          <SectionHead>
            <h3>布局</h3>
            <Marked aria-label="显示或隐藏"><Icon name="eye" size={16} w={1.2} /></Marked>
            <Tip role="tooltip">布局模式：隐藏 display：none</Tip>
            <IconButton aria-label="收起布局"><Chevron /></IconButton>
          </SectionHead>
          <Stack>
            <Pair>
              <Field><Prefix>宽</Prefix><input aria-label="宽" /><em>px</em></Field>
              <Field><Prefix>高</Prefix><input aria-label="高" /><em>px</em></Field>
            </Pair>
            <Spacing>
              <SpacingTop><span>外边距</span><Zero aria-label="上外边距" defaultValue="0" /><span>margin</span></SpacingTop>
              <Zero aria-label="左外边距" defaultValue="0" />
              <Spacing $inner>
                <SpacingTop><span>内边距</span><Zero aria-label="上内边距" defaultValue="0" /><span>padding</span></SpacingTop>
                <Zero aria-label="左内边距" defaultValue="0" />
                <Core />
                <Zero aria-label="右内边距" defaultValue="0" $end />
                <Zero aria-label="下内边距" defaultValue="0" $wide />
              </Spacing>
              <Zero aria-label="右外边距" defaultValue="0" $end />
              <Zero aria-label="下外边距" defaultValue="0" $wide />
            </Spacing>
            <Segments>
              <Tab $on $blue>默认</Tab>
              <Tab>横向排列</Tab>
              <Tab>纵向排列</Tab>
            </Segments>
            <FlexBar>
              {["alignL", "alignC", "alignR", "spread"].map((n) => (
                <button key={n} aria-label={n}><Icon name={n} size={15} w={1.3} /></button>
              ))}
              <i />
              {["alignT", "alignM", "alignB"].map((n) => (
                <button key={n} aria-label={n}><Icon name={n} size={15} w={1.3} /></button>
              ))}
            </FlexBar>
          </Stack>
        </Section>
        <Section>
          <SectionHead><h3>填充</h3><IconButton aria-label="收起填充"><Chevron /></IconButton></SectionHead>
          <Stack>
            <BorderField><BorderBox><Icon name="box" size={18} w={1.4} /></BorderBox>无边框</BorderField>
          </Stack>
        </Section>
      </Props>
      <Track $top={108} $len={396} />
    </Right>
  );
}

export default function App() {
  return (
    <>
      <GlobalStyle />
      <Shell>
        <Rail>
          <Logo href="#" aria-label="微搭">
            <svg width="25" height="21" viewBox="0 0 25 21" aria-hidden="true">
              <path fill="#10a86c" d="M0 4.500 6 0 11.500 3.500 2.500 9.500 4.500 12 12 9.500 7 21 0 16.500z" />
              <path fill="#4a86f5" d="M25 16.500 19 21 13.500 17.500 22.500 11.500 20.500 9 13 11.500 18 0 25 4.500z" />
            </svg>
          </Logo>
          <RailButton $on aria-label="设计">
            <svg width="19" height="18" viewBox="0 0 19 18" aria-hidden="true">
              <path fill="#0052d9" d="M1 0h4.500v18H1a1 1 0 0 1-1-1V1a1 1 0 0 1 1-1zM6.500 0H18a1 1 0 0 1 1 1v4H6.500zM6.500 6H19v11a1 1 0 0 1-1 1H6.500z" />
            </svg>
          </RailButton>
          <RailButton aria-label="数据源"><Icon name="database" size={22} w={1} /></RailButton>
          <RailButton aria-label="素材"><Icon name="image" size={23} w={0.9} /></RailButton>
          <RailButton aria-label="设置"><Icon name="hexagon" size={23} w={0.8} /></RailButton>
          <RailButton $last aria-label="帮助"><Icon name="help" size={23} w={0.9} /></RailButton>
        </Rail>
        <Main>
          <Header>
            <Nav>
              <Brand>页面设计</Brand>
              <a href="#var">变量</a>
              <a href="#code">代码编辑器</a>
              <a href="#more">更多</a>
            </Nav>
            <Project>
              家政服务小程序
              <Status><Icon name="cloud" size={18} w={1} color="#8d9cc0" /><Dot />暂未保存到云端</Status>
            </Project>
            <Actions>
              <HeadButton aria-label="帮助"><Icon name="help" size={17} w={1} /></HeadButton>
              <HeadButton aria-label="历史"><Icon name="clock" size={17} w={1} /></HeadButton>
              <HeadButton aria-label="保存"><Icon name="save" size={18} w={1} /></HeadButton>
              <HeadButton aria-label="调试"><Icon name="bug" size={17} w={1} /></HeadButton>
              <Play aria-label="预览"><Icon name="play" size={17} w={1.2} /></Play>
              <Publish><Icon name="send" size={16} w={1.4} />发布</Publish>
              <More aria-label="更多操作">
                <svg width="16" height="4" viewBox="0 0 16 4" fill="#fff" aria-hidden="true">
                  <circle cx="2" cy="2" r="1.300" /><circle cx="8" cy="2" r="1.300" /><circle cx="14" cy="2" r="1.300" />
                </svg>
              </More>
            </Actions>
          </Header>
          <Body>
            <LeftPanel />
            <Work>
              <Toolbar>
                <ToolGroup $w={178} $gap={9}>
                  <ToolButton aria-label="手机"><Icon name="mobile" size={21} w={1} /></ToolButton>
                  <ToolButton $on aria-label="小程序"><Icon name="mini" size={21} w={1} /></ToolButton>
                  <ToolButton aria-label="电脑"><Icon name="laptop" size={21} w={1} /></ToolButton>
                </ToolGroup>
                <ToolGroup $w={147}>
                  <SelectBox>
                    <select aria-label="机型" defaultValue="iPhone 8 100%"><option>iPhone 8 100%</option></select>
                    <Chevron />
                  </SelectBox>
                </ToolGroup>
                <ToolGroup $w={73}>
                  <ToolButton $narrow aria-label="刷新"><Icon name="refresh" size={18} w={1.1} /></ToolButton>
                </ToolGroup>
                <ToolGroup as="label" $w={118} $gap={7}>
                  预览区<Toggle type="checkbox" defaultChecked />
                </ToolGroup>
                <ToolGroup $open $gap={28}>
                  <ToolButton $narrow aria-label="撤销"><Icon name="undo" size={17} w={1.2} /></ToolButton>
                  <ToolButton $narrow aria-label="重做"><Icon name="redo" size={17} w={1.2} /></ToolButton>
                </ToolGroup>
              </Toolbar>
              <Body>
                <Center>
                  <Stage>
                    <Panes>
                      <Pane><Phone editing /></Pane>
                      <Pane><Bezel><Phone /></Bezel></Pane>
                    </Panes>
                    <Track $top={139} $len={163} />
                  </Stage>
                  <Crumbs>
                    <ol>
                      {crumbs.map((t, i) => (
                        <li key={i}>{t}{i < crumbs.length - 1 && <Icon name="right" size={12} w={1.4} />}</li>
                      ))}
                    </ol>
                    <button><Icon name="panel" size={16} />开发调试工具</button>
                  </Crumbs>
                  <VariablePanel />
                </Center>
                <StylePanel />
              </Body>
            </Work>
          </Body>
        </Main>
        <Watermark>CSDN @低代码布道师</Watermark>
        <Meter>
          <svg width="6" height="60" viewBox="0 0 6 60" aria-hidden="true">
            {meterColors.map((fill, i) => <rect key={i} x="0" y={i * 4} width="6" height="2" fill={fill} />)}
          </svg>
        </Meter>
      </Shell>
    </>
  );
}
